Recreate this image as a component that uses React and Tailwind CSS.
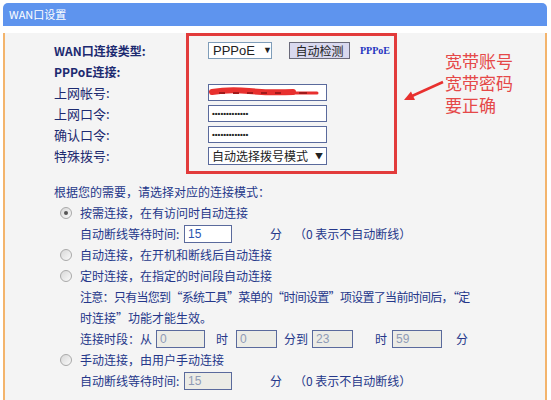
import React from 'react'

const cjk = "font-['Noto_Sans_CJK_SC','Liberation_Sans',sans-serif]"

function Radio({ on }) {
  return (
    <span className="relative ml-[6px] flex h-[12px] w-[12px] shrink-0 items-center justify-center rounded-full border border-[#a9a9a9] bg-gradient-to-br from-[#d8d8d8] to-[#fafafa]">
      {on ? <span className="h-[4px] w-[4px] rounded-full bg-[#555]" /> : null}
    </span>
  )
}

function Box({ value, w = 'w-[48px]', off }) {
  return (
    <span
      className={`flex h-[18px] ${w} shrink-0 items-center border border-[#5a6a9c] pl-[3px] font-['Liberation_Sans',sans-serif] text-[12px] ${
        off ? 'bg-[#ecece6] text-[#8f9bb5]' : 'bg-white text-[#2a55b0]'
      }`}
    >
      {value}
    </span>
  )
}

function Row({ children, className = '' }) {
  return <div className={`flex h-[21px] items-center whitespace-nowrap ${className}`}>{children}</div>
}

function WaitRow({ off }) {
  return (
    <Row className="pl-[26px]">
      <span className="w-[104px]">自动断线等待时间:</span>
      <Box value="15" off={off} />
      <span className="ml-[38px]">分</span>
      <span className="ml-[12px]">（0 表示不自动断线）</span>
    </Row>
  )
}

function Dots() {
  return (
    <span className="flex h-[17px] w-[119px] items-center border border-[#5a6a9c] bg-white pl-[3px] font-['Liberation_Sans',sans-serif] text-[8px] font-bold leading-none text-[#222]">
      •••••••••••••
    </span>
  )
}

export default function App() {
  const labels = ['WAN口连接类型:', 'PPPoE连接:', '上网帐号:', '上网口令:', '确认口令:', '特殊拨号:']
  const notes = ['宽带账号', '宽带密码', '要正确']

  return (
    <div className={`h-[400px] w-[551px] overflow-hidden bg-white pl-[3px] pr-[4px] pt-[3px] ${cjk}`}>
      <div className="overflow-hidden rounded-t-[5px]">
        <div className="flex h-[23px] items-center bg-[#5e94ee] pl-[6px] text-[11px] text-white">WAN口设置</div>

        <div className="h-[374px] border-x-2 border-[#f3b46c] bg-[#f4f4f4] pl-[49px] text-[12px] text-[#24378a]">
          {/* top form */}
          <div className="mt-[7px] flex items-start">
            <div className="w-[132px] pt-[7px]">
              {labels.map((l, i) => (
                <Row key={l} className={i < 2 ? 'font-bold text-[#1c2a70]' : 'text-[13px] text-[#1c2a70]'}>
                  {l}
                </Row>
              ))}
            </div>

            <div className="h-[141px] w-[211px] border-[3px] border-[#e23b3b] pl-[19px] pt-[4px]">
              <Row>
                <span className="flex h-[17px] w-[64px] items-center border border-[#7f9db9] bg-white pl-[4px] font-['Liberation_Sans',sans-serif] text-[13px] text-[#222]">
                  PPPoE<span className="ml-[8px] text-[9px]">▼</span>
                </span>
                <span className="ml-[17px] flex h-[17px] w-[61px] items-center justify-center border border-[#6a6a7a] bg-[#d9d9ef] text-[12px] text-[#222]">
                  自动检测
                </span>
                <span className="ml-[10px] font-['Liberation_Serif',serif] text-[10px] font-bold text-[#2435c0]">PPPoE</span>
              </Row>
              <Row />
              <Row>
                <span className="relative flex h-[17px] w-[119px] items-center border border-[#5a6a9c] bg-white">
                  <svg width="119" height="17" className="absolute left-0 top-0">
                    <path d="M3 7 Q20 4 40 6 T84 7" stroke="#e8302e" strokeWidth="6" fill="none" strokeLinecap="round" />
                    <path d="M84 8 L108 8" stroke="#e8302e" strokeWidth="3" strokeLinecap="round" />
                    <path d="M10 8 L16 8 M24 8 L30 8 M38 8 L44 8 M52 8 L58 8 M66 8 L72 8 M90 8 L98 8" stroke="#a11a1a" strokeWidth="2" />
                  </svg>
                </span>
              </Row>
              <Row>
                <Dots />
              </Row>
              <Row>
                <Dots />
              </Row>
              <Row>
                <span className="flex h-[18px] w-[119px] items-center border border-[#5a6a9c] bg-white pl-[3px] text-[12px] text-[#222]">
                  自动选择拨号模式<span className="ml-[7px] text-[8px]">▼</span>
                </span>
              </Row>
            </div>

            <div className="ml-[4px] flex items-start">
              <svg width="44" height="24" className="mt-[46px]">
                <line x1="42" y1="3" x2="11" y2="17" stroke="#e8302e" strokeWidth="2.5" />
                <polygon points="3,21 14,21 10,12.5" fill="#e8302e" />
              </svg>
              <div className="mt-[16px] text-[17px] text-[#e54848]">
                {notes.map((n) => (
                  <div key={n} className="flex h-[22px] items-center">
                    <span className="leading-none">{n}</span>
                  </div>
                ))}
              </div>
            </div>
          </div>

          {/* connection mode */}
          <div className="mt-[7px]">
            <Row>根据您的需要，请选择对应的连接模式：</Row>
            <Row>
              <Radio on />
              <span className="ml-[8px]">按需连接，在有访问时自动连接</span>
            </Row>
            <WaitRow />
            <Row>
              <Radio />
              <span className="ml-[8px]">自动连接，在开机和断线后自动连接</span>
            </Row>
            <Row>
              <Radio />
              <span className="ml-[8px]">定时连接，在指定的时间段自动连接</span>
            </Row>
            <Row className="pl-[26px] tracking-[-0.7px]">注意：只有当您到“系统工具”菜单的“时间设置”项设置了当前时间后，“定</Row>
            <Row className="pl-[26px]">时连接”功能才能生效。</Row>
            <Row className="pl-[26px]">
              <span>连接时段：从</span>
              <span className="ml-[4px]" />
              <Box value="0" w="w-[49px]" off />
              <span className="ml-[11px]">时</span>
              <Box value="0" w="w-[41px] ml-[8px]" off />
              <span className="ml-[7px]">分到</span>
              <Box value="23" w="w-[41px] ml-[4px]" off />
              <span className="ml-[22px]">时</span>
              <Box value="59" w="w-[50px] ml-[5px]" off />
              <span className="ml-[14px]">分</span>
            </Row>
            <Row>
              <Radio />
              <span className="ml-[8px]">手动连接，由用户手动连接</span>
            </Row>
            <WaitRow off />
          </div>
        </div>
      </div>
    </div>
  )
}
